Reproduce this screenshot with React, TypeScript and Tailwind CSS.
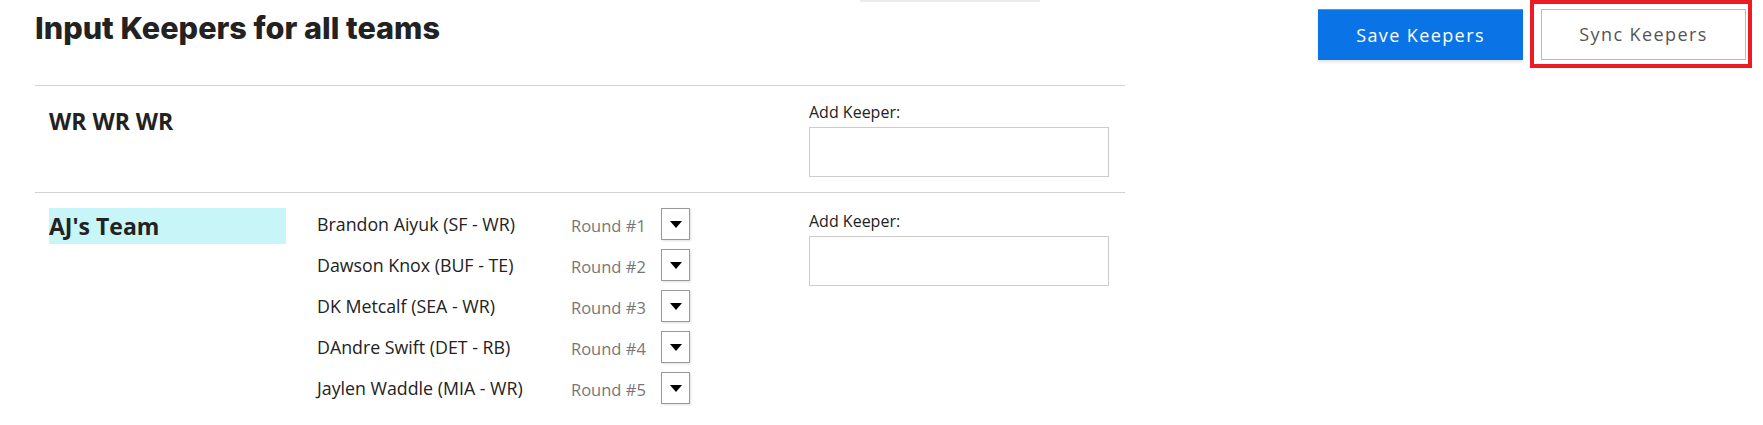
import React from 'react'

interface Keeper {
  name: string
  round: number
}

interface Team {
  name: string
  highlight?: boolean
  keepers: Keeper[]
}

const teams: Team[] = [
  { name: 'WR WR WR', keepers: [] },
  {
    name: "AJ's Team",
    highlight: true,
    keepers: [
      { name: 'Brandon Aiyuk (SF - WR)', round: 1 },
      { name: 'Dawson Knox (BUF - TE)', round: 2 },
      { name: 'DK Metcalf (SEA - WR)', round: 3 },
      { name: 'DAndre Swift (DET - RB)', round: 4 },
      { name: 'Jaylen Waddle (MIA - WR)', round: 5 },
    ],
  },
]

function RoundSelect() {
  return (
    <button
      type="button"
      className="flex h-[32px] w-[29px] items-center justify-center border border-[#999] bg-white shadow-[1px_1px_2px_rgba(0,0,0,0.12)]"
    >
      <svg width="12" height="7" viewBox="0 0 12 7">
        <polygon points="0,0 12,0 6,7" fill="#000" />
      </svg>
    </button>
  )
}

function KeeperInput({ first }: { first: boolean }) {
  return (
    <div className={`w-[300px] ${first ? 'pt-[16px]' : 'pt-[18px]'}`}>
      <label className="block text-[16px] leading-[20px] text-[#222]">Add Keeper:</label>
      <input type="text" className="mt-[5px] block h-[50px] w-[300px] border border-[#ccc] bg-white outline-none" />
    </div>
  )
}

function TeamRow({ team, first }: { team: Team; first: boolean }) {
  return (
    <div className={`flex border-t border-[#d2d2d2] pl-[14px] ${first ? 'pb-[15px]' : 'pb-[20px]'}`}>
      <div className={`w-[237px] ${first ? 'pt-[17px]' : 'pt-[15px]'}`}>
        <h2
          className={`text-[23px] font-bold leading-[36px] text-[#222] ${team.highlight ? 'bg-[#c8f5f8]' : ''}`}
        >
          {team.name}
        </h2>
      </div>
      <div className="ml-[31px] flex w-[373px] flex-col gap-[9px] pt-[15px]">
        {team.keepers.map((k) => (
          <div key={k.name} className="flex h-[32px] items-center">
            <span className="w-[254px] text-[17.8px] text-[#222]">{k.name}</span>
            <span className="mt-[4px] w-[90px] text-[16.5px] text-[#777]">Round #{k.round}</span>
            <RoundSelect />
          </div>
        ))}
      </div>
      <div className="ml-[119px]">
        <KeeperInput first={first} />
      </div>
    </div>
  )
}

export default function App() {
  return (
    <div className="flex min-h-[425px] w-full bg-white font-['Open_Sans',sans-serif] text-[#222]">
      <div className="w-[1125px] shrink-0 pl-[35px]">
        <div className="flex h-[85px] items-start">
          <h1 className="w-[825px] pt-[10px] font-['Inter',sans-serif] text-[30.6px] font-extrabold leading-[36px] text-[#222]">
            Input Keepers for all teams
          </h1>
          <div className="h-[2px] w-[180px] bg-[#ececec]" />
        </div>
        {teams.map((team, i) => (
          <TeamRow key={team.name} team={team} first={i === 0} />
        ))}
      </div>

      <div className="ml-auto flex items-start gap-[18px] pr-[17px] pt-[9px]">
        <button
          type="button"
          className="h-[51px] w-[205px] border-t border-[#4a98ec] bg-[#0a74e6] text-[18px] tracking-[1.4px] text-white shadow-[0_2px_3px_rgba(0,0,0,0.12)]"
        >
          Save Keepers
        </button>
        <div className="relative">
          <button
            type="button"
            className="h-[51px] w-[205px] border border-[#bbb] bg-white text-[18px] tracking-[1.4px] text-[#555]"
          >
            Sync Keepers
          </button>
          <div className="absolute left-[-11px] top-[-9px] h-[68px] w-[222px] border-4 border-[#ed1c24]" />
        </div>
      </div>
    </div>
  )
}
